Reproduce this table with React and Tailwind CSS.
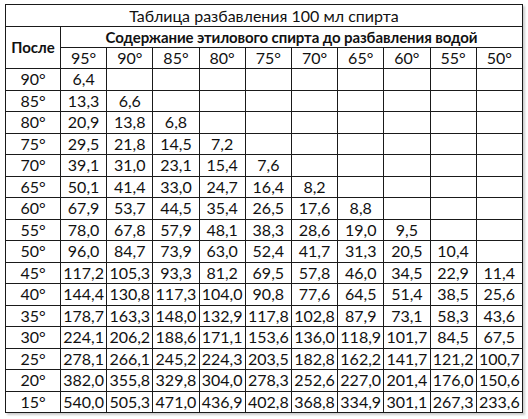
import React from "react";

const cols = ["95°", "90°", "85°", "80°", "75°", "70°", "65°", "60°", "55°", "50°"];

const rows = [
  ["90°", ["6,4"]],
  ["85°", ["13,3", "6,6"]],
  ["80°", ["20,9", "13,8", "6,8"]],
  ["75°", ["29,5", "21,8", "14,5", "7,2"]],
  ["70°", ["39,1", "31,0", "23,1", "15,4", "7,6"]],
  ["65°", ["50,1", "41,4", "33,0", "24,7", "16,4", "8,2"]],
  ["60°", ["67,9", "53,7", "44,5", "35,4", "26,5", "17,6", "8,8"]],
  ["55°", ["78,0", "67,8", "57,9", "48,1", "38,3", "28,6", "19,0", "9,5"]],
  ["50°", ["96,0", "84,7", "73,9", "63,0", "52,4", "41,7", "31,3", "20,5", "10,4"]],
  ["45°", ["117,2", "105,3", "93,3", "81,2", "69,5", "57,8", "46,0", "34,5", "22,9", "11,4"]],
  ["40°", ["144,4", "130,8", "117,3", "104,0", "90,8", "77,6", "64,5", "51,4", "38,5", "25,6"]],
  ["35°", ["178,7", "163,3", "148,0", "132,9", "117,8", "102,8", "87,9", "73,1", "58,3", "43,6"]],
  ["30°", ["224,1", "206,2", "188,6", "171,1", "153,6", "136,0", "118,9", "101,7", "84,5", "67,5"]],
  ["25°", ["278,1", "266,1", "245,2", "224,3", "203,5", "182,8", "162,2", "141,7", "121,2", "100,7"]],
  ["20°", ["382,0", "355,8", "329,8", "304,0", "278,3", "252,6", "227,0", "201,4", "176,0", "150,6"]],
  ["15°", ["540,0", "505,3", "471,0", "436,9", "402,8", "368,8", "334,9", "301,1", "267,3", "233,6"]],
];

const cell = "border border-[#1a1a1a] p-0 text-center align-middle";

export default function App() {
  return (
    <div className="w-[528px] h-[419px] bg-white pl-[5px] pt-[4px]" style={{ fontFamily: "Lato, 'Open Sans', sans-serif" }}>
      <table className="table-fixed border-collapse w-[517px] text-[16px] leading-none text-[#111] shadow-[2px_2px_2px_rgba(0,0,0,0.2)]">
        <colgroup>
          <col className="w-[55px]" />
          {cols.map((c) => (
            <col key={c} className="w-[46.2px]" />
          ))}
        </colgroup>
        <thead>
          <tr className="h-[22px]">
            <th colSpan={11} className={cell + " font-normal"}>
              Таблица разбавления 100 мл спирта
            </th>
          </tr>
          <tr className="h-[21px]">
            <th rowSpan={2} className={cell + " font-bold text-[15px] tracking-[-0.1px]"}>
              После
            </th>
            <th colSpan={10} className={cell + " font-bold text-[15px] tracking-[-0.1px]"}>
              Содержание этилового спирта до разбавления водой
            </th>
          </tr>
          <tr className="h-[21px]">
            {cols.map((c) => (
              <th key={c} className={cell + " font-normal"}>
                {c}
              </th>
            ))}
          </tr>
        </thead>
        <tbody>
          {rows.map(([label, vals]) => (
            <tr key={label} className="h-[21.5px]">
              <td className={cell}>{label}</td>
              {cols.map((c, i) => (
                <td key={c} className={cell}>
                  {vals[i] || ""}
                </td>
              ))}
            </tr>
          ))}
        </tbody>
      </table>
    </div>
  );
}
